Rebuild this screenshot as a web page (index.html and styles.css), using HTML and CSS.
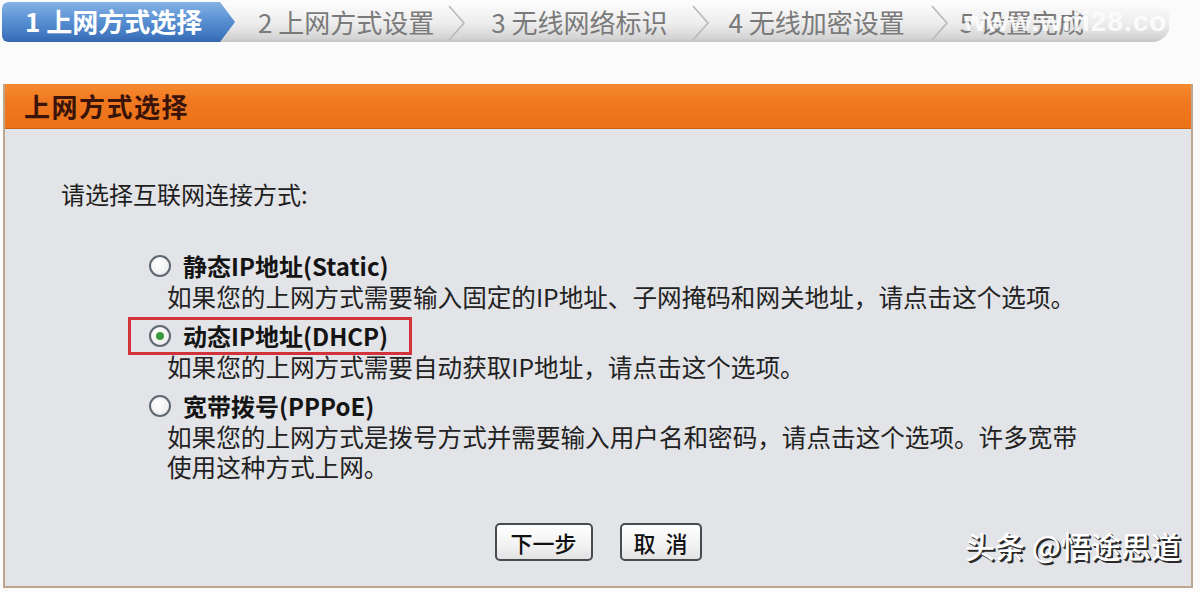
FILE: index.html
```html
<!DOCTYPE html>
<html lang="zh-CN">
<head>
    <meta charset="UTF-8">
    <title>上网方式选择</title>
    <link rel="stylesheet" href="styles.css">
</head>
<body>

<!-- Langkah wizard -->
<div class="stepbar">
    <div class="step step-active">1 上网方式选择</div>
    <div class="step s2">2 上网方式设置</div>
    <svg class="chev c1" width="22" height="40" viewBox="0 0 22 40"><polyline points="3,4 18,21 3,38" fill="none" stroke="#b9b9b9" stroke-width="1.6"/></svg>
    <div class="step s3">3 无线网络标识</div>
    <svg class="chev c2" width="22" height="40" viewBox="0 0 22 40"><polyline points="3,4 18,21 3,38" fill="none" stroke="#b9b9b9" stroke-width="1.6"/></svg>
    <div class="step s4">4 无线加密设置</div>
    <svg class="chev c3" width="22" height="40" viewBox="0 0 22 40"><polyline points="3,4 18,21 3,38" fill="none" stroke="#b9b9b9" stroke-width="1.6"/></svg>
    <div class="step s5">5 设置完成</div>
    <span class="site-mark">www.wifi28.com</span>
</div>

<div class="panel">
    <div class="panel-head">上网方式选择</div>
    <div class="panel-body">
        <p class="prompt">请选择互联网连接方式:</p>

        <div class="option">
            <div class="option-head">
                <span class="radio"></span>
                <span class="option-name">静态IP地址(Static)</span>
            </div>
            <div class="option-desc">如果您的上网方式需要输入固定的IP地址、子网掩码和网关地址，请点击这个选项。</div>
        </div>

        <div class="option">
            <div class="option-head picked">
                <span class="radio checked"></span>
                <span class="option-name">动态IP地址(DHCP)</span>
            </div>
            <div class="option-desc">如果您的上网方式需要自动获取IP地址，请点击这个选项。</div>
        </div>

        <div class="option">
            <div class="option-head">
                <span class="radio"></span>
                <span class="option-name">宽带拨号(PPPoE)</span>
            </div>
            <div class="option-desc">如果您的上网方式是拨号方式并需要输入用户名和密码，请点击这个选项。许多宽带<br>使用这种方式上网。</div>
        </div>

        <div class="actions">
            <button class="btn btn-next">下一步</button>
            <button class="btn btn-cancel">取&nbsp;&nbsp;消</button>
        </div>

        <span class="author-mark">头条 @悟途思道</span>
    </div>
</div>

</body>
</html>
```

FILE: styles.css
```css
/* Dasar halaman */
body {
    margin: 0;
    background-color: #fbfbfb;
    font-family: "Noto Sans CJK SC", "DejaVu Sans", sans-serif;
    color: #1e1e1e;
}

/* Bar langkah di atas */
.stepbar {
    position: relative;
    display: flex;
    align-items: center;
    width: 1168px;
    height: 40px;
    margin: 2px 0 0 2px;
    border-radius: 6px 18px 18px 6px;
    overflow: hidden;
    background: linear-gradient(#fdfdfd, #ececec 55%, #d4d4d4 90%, #c4c4c4);
}

.step {
    font-size: 26px;
    color: #7a7a7a;
    white-space: nowrap;
    line-height: 38px;
}

.step-active {
    width: 210px;
    height: 40px;
    padding-left: 23px;
    color: #fff;
    font-weight: bold;
    background: linear-gradient(#86b2e4, #5a91d3 45%, #3f76bf 85%, #3467ad);
    clip-path: polygon(0 0, 218px 0, 100% 50%, 218px 100%, 0 100%);
    border-radius: 6px 0 0 6px;
}

.s2 { margin-left: 23px; }
.c1 { margin-left: 12px; }
.s3 { margin-left: 23px; }
.c2 { margin-left: 22px; }
.s4 { margin-left: 17px; }
.c3 { margin-left: 24px; }
.s5 { margin-left: 9px; }

.chev {
    flex-shrink: 0;
}

.site-mark {
    position: absolute;
    left: 962px;
    top: 4px;
    font-size: 28px;
    font-weight: bold;
    color: rgba(255, 255, 255, 0.82);
    font-family: "Liberation Sans", sans-serif;
    letter-spacing: 1px;
    white-space: nowrap;
}

/* Panel utama */
.panel {
    width: 1186px;
    height: 502px;
    margin: 42px 0 0 3px;
    border: 2px solid #bda58f;
    border-top: none;
    background-color: #e2e4e7;
}

.panel-head {
    height: 44px;
    line-height: 44px;
    padding-left: 19px;
    font-size: 26px;
    font-weight: bold;
    letter-spacing: 1.5px;
    color: #3a1408;
    background: linear-gradient(#f58a2e, #f07820 40%, #ec7118);
    border-bottom: 1px solid #c66214;
}

.panel-body {
    position: relative;
    padding: 0 0 0 56px;
}

.prompt {
    margin: 0;
    padding-top: 50px;
    font-size: 24px;
    line-height: 30px;
}

/* Pilihan koneksi */
.option {
    margin-left: 88px;
    margin-bottom: 10px;
    font-size: 24.6px;
    line-height: 30px;
}

.prompt + .option {
    margin-top: 42px;
}

.option-head {
    display: flex;
    align-items: center;
    gap: 12px;
    width: fit-content;
    height: 30px;
}

.option-head.picked {
    height: 32px;
    margin: -4px 0 -4px -21px;
    padding: 0 21px 0 18px;
    border: 3px solid #d2333b;
}

.option-name {
    font-weight: bold;
    font-size: 24px;
    color: #141414;
}

.option-desc {
    margin-left: 18px;
    color: #222;
}

.radio {
    width: 18px;
    height: 18px;
    border-radius: 50%;
    border: 2px solid #5f6770;
    background: radial-gradient(circle at 40% 35%, #fff, #e6e8ea);
    display: flex;
    align-items: center;
    justify-content: center;
}

.radio.checked::after {
    content: "";
    width: 8px;
    height: 8px;
    border-radius: 50%;
    background-color: #3c9a3c;
}

/* Tombol */
.actions {
    display: flex;
    justify-content: center;
    gap: 27px;
    margin: 42px 0 0 -56px;
}

.btn {
    height: 38px;
    border: 2px solid #464b52;
    border-radius: 5px;
    background: linear-gradient(#ffffff, #f2f2f2 60%, #e2e2e2);
    font-family: "Noto Sans CJK SC", sans-serif;
    font-size: 22px;
    font-weight: 500;
    color: #111;
    padding: 0;
    line-height: 32px;
}

.btn-next { width: 98px; }
.btn-cancel { width: 82px; }

.author-mark {
    position: absolute;
    right: 10px;
    top: 394px;
    font-size: 30px;
    font-weight: 500;
    color: #fff;
    white-space: nowrap;
    text-shadow: 2px 2px 0 #2a2a2a, 1px 1px 0 #2a2a2a;
}
```
